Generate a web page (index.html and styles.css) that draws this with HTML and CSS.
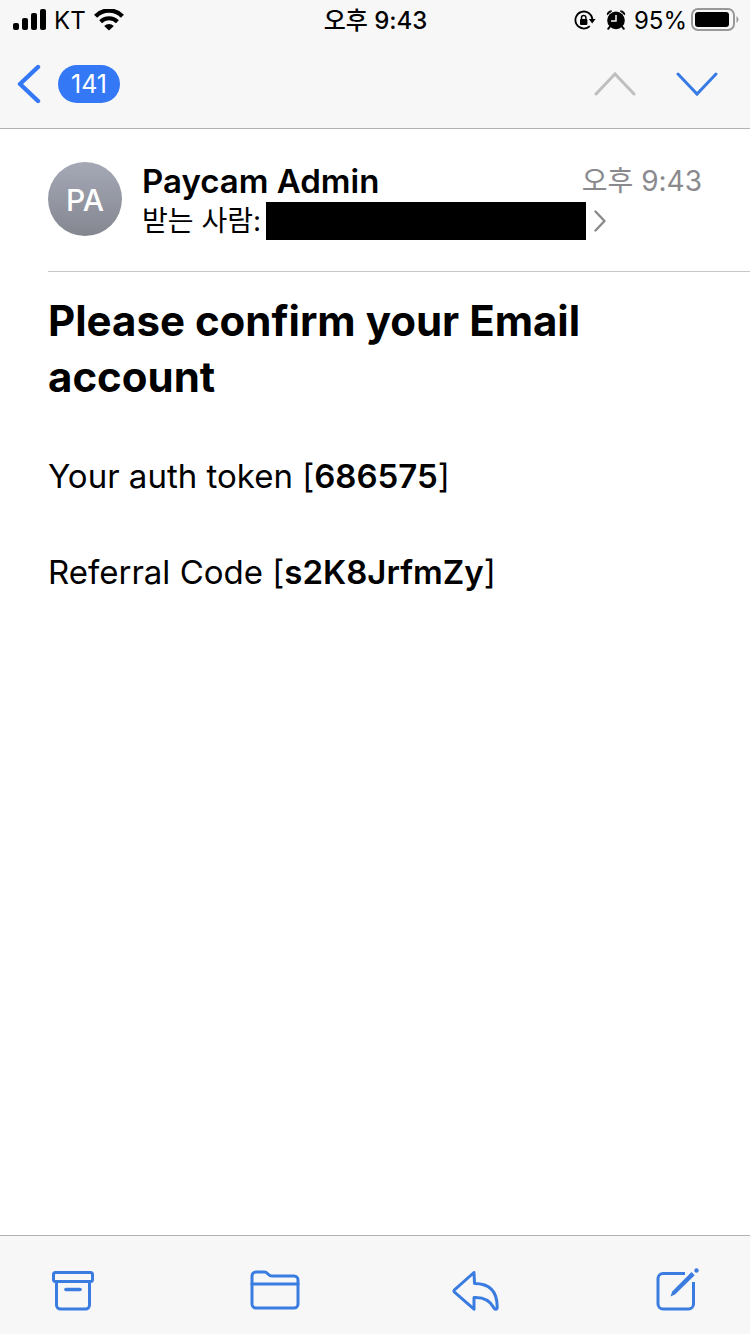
FILE: index.html
```html
<!DOCTYPE html>
<html lang="ko">
<head>
<meta charset="utf-8">
<meta name="viewport" content="width=device-width, initial-scale=1">
<title>Paycam Admin</title>
<link rel="stylesheet" href="styles.css">
</head>
<body>
<div class="screen">
  <header class="topbar">
    <div class="status">
      <div class="status-group">
        <svg class="icon" width="34" height="22" viewBox="0 0 34 22" aria-hidden="true">
          <rect x="1" y="14" width="6" height="7" rx="2"/>
          <rect x="10" y="9" width="6" height="12" rx="2"/>
          <rect x="19" y="4" width="6" height="17" rx="2"/>
          <rect x="28" y="0" width="6" height="21" rx="2"/>
        </svg>
        <span>KT</span>
        <svg class="icon" width="30" height="22" viewBox="0 0 30 22" aria-hidden="true">
          <path d="M1.600 7.200a18.800 18.800 0 0 1 26.800 0" fill="none" stroke="#000" stroke-width="4.400"/>
          <path d="M6.600 12.700a12 12 0 0 1 16.800 0" fill="none" stroke="#000" stroke-width="4"/>
          <path d="M15 21.600l-4.800-4.700a6.800 6.800 0 0 1 9.600 0z"/>
        </svg>
      </div>
      <time class="clock">오후 9:43</time>
      <div class="status-group">
        <svg class="icon lock" width="22" height="20" viewBox="0 0 22 20" aria-hidden="true">
          <path d="M15.800 16.200a8.500 8.500 0 1 1 2.600-6.800" fill="none" stroke="#000" stroke-width="1.800"/>
          <path d="M14.800 9h6.800l-3.400 4.600z"/>
          <rect x="6" y="9" width="7.400" height="6" rx="1"/>
          <path d="M7.500 9.500V7.600a2.200 2.200 0 0 1 4.400 0v1.900" fill="none" stroke="#000" stroke-width="1.500"/>
        </svg>
        <svg class="icon" width="20" height="20" viewBox="0 0 20 20" aria-hidden="true">
          <circle cx="10" cy="10.400" r="8.800"/>
          <path d="M1.300 4.800a3.600 3.600 0 0 1 4.400-3.800zM18.700 4.800a3.600 3.600 0 0 0-4.400-3.800z" stroke="#000" stroke-width="1" stroke-linejoin="round"/>
          <path d="M4 16.500l-1.800 2.300M16 16.500l1.800 2.300" stroke="#000" stroke-width="2" stroke-linecap="round"/>
          <path d="M10 5v6H5" fill="none" stroke="#f7f7f7" stroke-width="1.500"/>
        </svg>
        <span>95%</span>
        <svg class="icon battery" width="48" height="24" viewBox="0 0 48 24" aria-hidden="true">
          <rect x="1" y="1" width="42" height="21" rx="6" fill="none" stroke="#999" stroke-width="2"/>
          <rect x="4" y="4" width="34" height="15" rx="3"/>
          <path d="M45.500 8q4 3.500 0 7z" fill="#999"/>
        </svg>
      </div>
    </div>
    <nav class="nav">
      <button class="plain back" type="button" aria-label="뒤로">
        <svg class="icon" width="24" height="40" viewBox="0 0 24 40" aria-hidden="true">
          <path d="M21 3L3 20l18 17" fill="none" stroke="#3578f6" stroke-width="4.400" stroke-linecap="round" stroke-linejoin="round"/>
        </svg>
        <span class="badge">141</span>
      </button>
      <div class="steps">
        <button class="plain" type="button" aria-label="이전 메시지" disabled>
          <svg class="icon" width="42" height="26" viewBox="0 0 42 26" aria-hidden="true">
            <path d="M2 23L21 3l19 20" fill="none" stroke="#bfbfbf" stroke-width="3" stroke-linecap="round"/>
          </svg>
        </button>
        <button class="plain" type="button" aria-label="다음 메시지">
          <svg class="icon" width="42" height="26" viewBox="0 0 42 26" aria-hidden="true">
            <path d="M2 3l19 20L40 3" fill="none" stroke="#387be4" stroke-width="3" stroke-linecap="round"/>
          </svg>
        </button>
      </div>
    </nav>
  </header>

  <main class="message">
    <section class="sender">
      <div class="avatar">PA</div>
      <div class="sender-info">
        <div class="sender-line">
          <span class="sender-name">Paycam Admin</span>
          <time class="sent">오후 9:43</time>
        </div>
        <button class="plain recipient" type="button">
          <span>받는 사람:</span>
          <span class="redacted"></span>
          <svg class="icon" width="12" height="22" viewBox="0 0 12 22" aria-hidden="true">
            <path d="M1.500 1.500L10.500 11l-9 9.500" fill="none" stroke="#8a8a8a" stroke-width="2.400" stroke-linecap="round" stroke-linejoin="round"/>
          </svg>
        </button>
      </div>
    </section>
    <article class="body">
      <h1 class="title">Please confirm your Email account</h1>
      <p class="text">Your auth token [<b>686575</b>]</p>
      <p class="text">Referral Code [<b>s2K8JrfmZy</b>]</p>
    </article>
  </main>

  <footer class="toolbar">
    <button class="plain" type="button" aria-label="보관">
      <svg class="icon tool" width="52" height="44" viewBox="0 0 52 44" aria-hidden="true">
        <rect x="6.500" y="4.500" width="39" height="9" rx="2"/>
        <path d="M9.500 13.500V37a4 4 0 0 0 4 4h25a4 4 0 0 0 4-4V13.500"/>
        <path d="M19 21.500h14" stroke-width="3.600"/>
      </svg>
    </button>
    <button class="plain" type="button" aria-label="이동">
      <svg class="icon tool" width="52" height="44" viewBox="0 0 52 44" aria-hidden="true">
        <path d="M4 36V8a4 4 0 0 1 4-4h8.500c3.500 0 3.500 4 7.500 4h22a4 4 0 0 1 4 4v24a4 4 0 0 1-4 4H8a4 4 0 0 1-4-4z"/>
        <path d="M4 16h46"/>
      </svg>
    </button>
    <button class="plain" type="button" aria-label="답장">
      <svg class="icon tool" width="52" height="44" viewBox="0 0 52 44" aria-hidden="true">
        <path d="M24 4.500L4.200 22.200Q3.500 23 4.200 23.800L24 41.200V29.500C34 29 40 32 44 40Q44.700 41.500 46 41.200Q47.200 41 47.200 39C47.200 24 40 15.500 24.500 15.500z"/>
      </svg>
    </button>
    <button class="plain" type="button" aria-label="새 메시지">
      <svg class="icon tool" width="52" height="44" viewBox="0 0 52 44" aria-hidden="true">
        <path d="M34 5.500H12a5 5 0 0 0-5 5V36a5 5 0 0 0 5 5H37.500a5 5 0 0 0 5-5V14" stroke-linecap="butt"/>
        <path d="M40.500 4l3.200 3.200L24 26.500 19.500 28.500l1.700-5z" fill="#3b7ce0" stroke="none"/>
        <circle cx="45.500" cy="2.500" r="2.200" fill="#3b7ce0" stroke="none"/>
      </svg>
    </button>
  </footer>
</div>
</body>
</html>
```

FILE: styles.css
```css
* {
  box-sizing: border-box;
}

body {
  margin: 0;
  background: #fff;
  color: #000;
  font-family: Inter, "Noto Sans CJK KR", sans-serif;
}

.screen {
  display: flex;
  flex-direction: column;
  min-height: 100vh;
}

.icon {
  display: block;
  flex: none;
}

.plain {
  padding: 0;
  border: 0;
  background: none;
  color: inherit;
  font: inherit;
}

.topbar {
  background: #f7f7f7;
  border-bottom: 1px solid #b2b2b2;
}

.status {
  display: grid;
  grid-template-columns: 1fr auto 1fr;
  align-items: center;
  height: 40px;
  padding: 0 11px 0 12px;
  font-size: 24px;
  line-height: 30px;
}

.status span,
.clock {
  padding-top: 2px;
}

.status-group {
  display: flex;
  align-items: center;
  gap: 8px;
}

.lock {
  margin-left: auto;
  margin-right: 2px;
}

.battery {
  margin-left: -4px;
}

.clock {
  font-weight: 500;
}

.nav {
  display: flex;
  align-items: center;
  justify-content: space-between;
  height: 88px;
  padding: 0 32px 0 17px;
}

.back {
  display: flex;
  align-items: center;
  gap: 17px;
}

.badge {
  padding: 0 13px;
  border-radius: 19px;
  background: #3578f6;
  color: #fff;
  font-size: 25px;
  line-height: 38px;
}

.steps {
  display: flex;
  gap: 40px;
}

.message {
  flex: 1;
  padding-left: 48px;
}

.sender {
  display: flex;
  align-items: flex-start;
  gap: 20px;
  padding: 33px 48px 31px 0;
  border-bottom: 1px solid #c8c8c8;
}

.avatar {
  flex: none;
  width: 74px;
  height: 74px;
  border-radius: 50%;
  background: linear-gradient(#a5a9b6, #848790);
  color: #fff;
  font-size: 30px;
  font-weight: 500;
  line-height: 76px;
  text-align: center;
}

.sender-info {
  flex: 1;
}

.sender-line {
  display: flex;
  align-items: center;
  justify-content: space-between;
  margin-bottom: 2px;
  line-height: 38px;
}

.sender-name {
  font-size: 33px;
  font-weight: 600;
}

.sent {
  color: #8a8a8e;
  font-size: 28px;
}

.recipient {
  display: flex;
  align-items: center;
  font-size: 28px;
  line-height: 38px;
}

.redacted {
  width: 320px;
  height: 38px;
  margin: 0 8px 0 5px;
  background: #000;
}

.body {
  padding: 21px 48px 0 0;
}

.title {
  margin: 0 0 47px;
  font-size: 42px;
  font-weight: 700;
  line-height: 56px;
}

.text {
  margin: 0 0 48px;
  font-size: 33px;
  line-height: 48px;
}

.text b {
  font-weight: 600;
}

.toolbar {
  display: flex;
  align-items: flex-start;
  justify-content: space-between;
  min-height: 99px;
  padding: 32px 47px 0;
  background: #f7f7f7;
  border-top: 1px solid #b2b2b2;
}

.tool {
  overflow: visible;
  fill: none;
  stroke: #3b7ce0;
  stroke-width: 3;
  stroke-linecap: round;
  stroke-linejoin: round;
}
```
